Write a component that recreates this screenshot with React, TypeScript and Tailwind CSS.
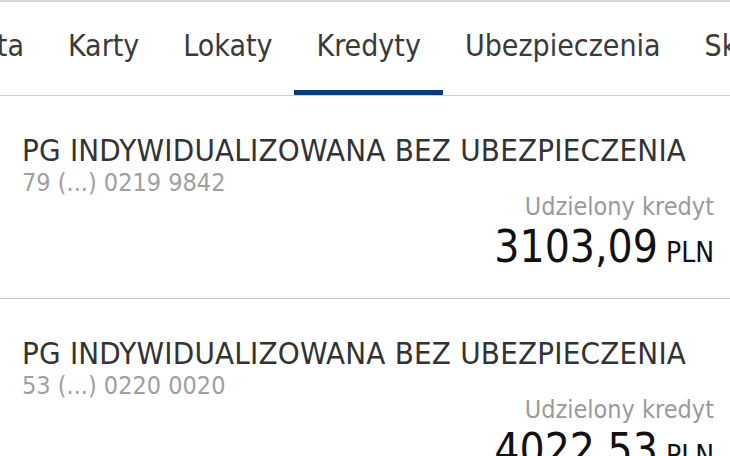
const tabs = ['Konta', 'Karty', 'Lokaty', 'Kredyty', 'Ubezpieczenia', 'Skarbonki']

const loans = [
  { name: 'PG INDYWIDUALIZOWANA BEZ UBEZPIECZENIA', number: '79 (...) 0219 9842', amount: '3103,09' },
  { name: 'PG INDYWIDUALIZOWANA BEZ UBEZPIECZENIA', number: '53 (...) 0220 0020', amount: '4022,53' },
]

export default function App() {
  return (
    <div
      className="w-[730px] h-[456px] overflow-hidden bg-white border-t-2 border-[#d4d4d4]"
      style={{ fontFamily: '"Liberation Sans Narrow", "DejaVu Sans Condensed", sans-serif' }}
    >
      <div className="overflow-hidden border-b border-[#d0d0d0]">
        <div className="flex -ml-[75px] whitespace-nowrap">
          {tabs.map((t) => (
            <div key={t} className="relative px-[22px] pt-[21px] h-[93px] text-[30px] text-[#3a3a3a]">
              {t}
              {t === 'Kredyty' && (
                <div className="absolute left-0 right-0 bottom-0 h-[5px] bg-[#0a3a78]" />
              )}
            </div>
          ))}
        </div>
      </div>

      {loans.map((l, i) => (
        <div key={i} className="px-[22px] pt-[36px] h-[203px] border-b border-[#c8c8c8]">
          <div className="text-[31px] leading-[36px] text-[#333333] tracking-[0.2px]">{l.name}</div>
          <div className="text-[25px] leading-[30px] text-[#a0a0a0]">{l.number}</div>
          <div className="flex flex-col items-end -mt-[6px] -mr-[6px]">
            <div className="text-[25px] leading-[30px] text-[#9a9a9a]">Udzielony kredyt</div>
            <div className="leading-[50px] text-[#111111]">
              <span className="text-[44px]">{l.amount}</span>
              <span className="text-[28px] ml-[8px]">PLN</span>
            </div>
          </div>
        </div>
      ))}
    </div>
  )
}
